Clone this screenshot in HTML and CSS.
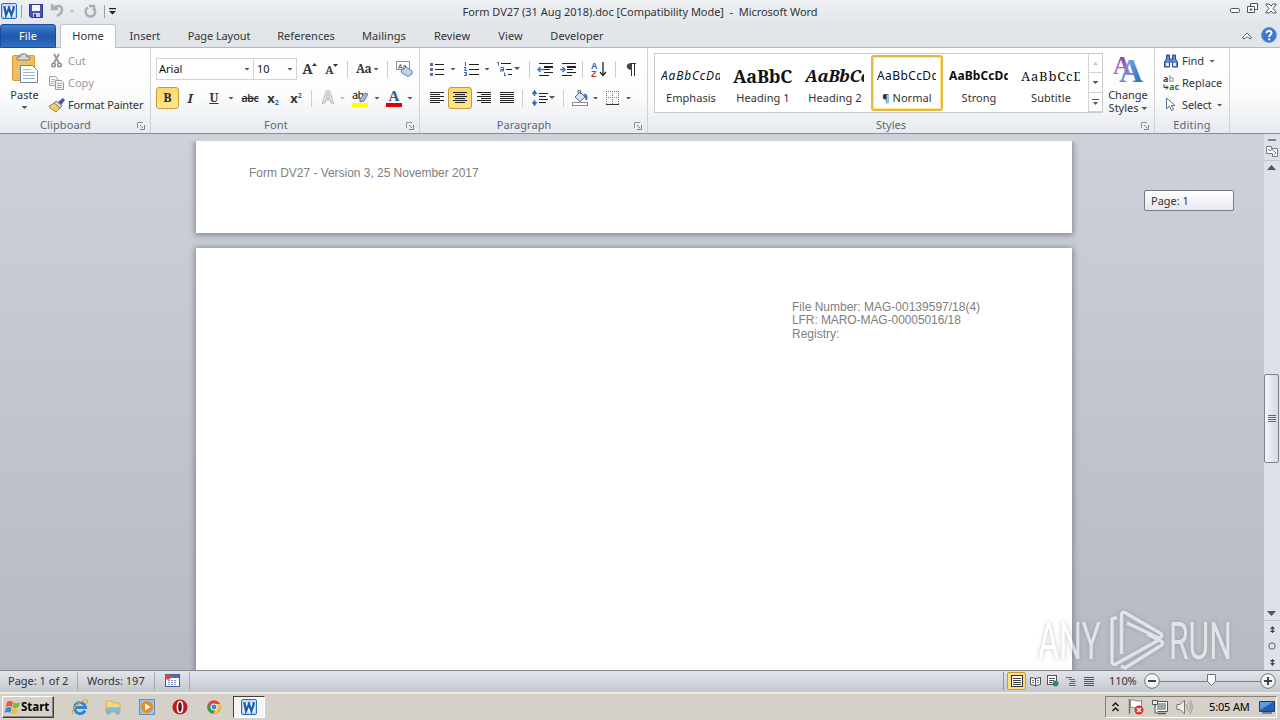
FILE: index.html
```
<!DOCTYPE html>
<html lang="en">
<head>
  <meta charset="UTF-8">
  <title>Form DV27 (31 Aug 2018).doc [Compatibility Mode] - Microsoft Word</title>
  <link rel="stylesheet" href="styles.css">
</head>
<body>

  <!-- shared icons -->
  <svg class="defs" width="0" height="0">
    <defs>
      <linearGradient id="blueG" x1="0" y1="0" x2="1" y2="1"><stop offset="0" stop-color="#8fc0f0"/><stop offset="1" stop-color="#1f5fb8"/></linearGradient>
      <linearGradient id="purpG" x1="0" y1="0" x2="0" y2="1"><stop offset="0" stop-color="#7a3f9c"/><stop offset="1" stop-color="#c878c8"/></linearGradient>
      <symbol id="word" viewBox="0 0 16 16">
        <rect x=".5" y=".5" width="15" height="15" rx="1.5" fill="#d3e4f8" stroke="#2b6fc0"/>
        <path d="M2 2h9l3 3v9H2z" fill="#f6faff" stroke="#8db3e2" stroke-width=".6"/>
        <path d="M3.500 4l1.500 8L8 5l2.500 7 2.500-8" fill="none" stroke="#1a5ab0" stroke-width="2.200"/>
        <path d="M2 3.800h3M6.500 3.800h3M11 3.800h3" stroke="#1f62b8"/>
      </symbol>
      <symbol id="launch" viewBox="0 0 8 8">
        <path d="M.5 6V.5H6" fill="none" stroke="#8b929b"/>
        <path d="M3 3l3 3M7.5 3v4.5H3" fill="none" stroke="#7b828b"/>
      </symbol>
    </defs>
  </svg>

  <div class="titlebar">
    <div class="quick">
      <svg width="16" height="16"><use href="#word"/></svg>
      <i class="vsep"></i>
      <svg width="14" height="14" viewBox="0 0 14 14"><path d="M.5.5h13v13H2L.5 12z" fill="#4c52b8" stroke="#33388c"/><path d="M3 1h8v6H3z" fill="#f2f4fc"/><path d="M4 9h7v4H4z" fill="#cdd2ea"/><path d="M5 10h2v3H5z" fill="#33388c"/></svg>
      <svg class="undo" width="13" height="14" viewBox="0 0 13 14"><path d="M1 0v5h6M1.500 5C4 1.500 11 .5 11 5.500c0 3-2 5-5 6.500" fill="none" stroke="#a9aeb5" stroke-width="2.500"/></svg>
      <b class="dn dim"></b>
      <svg class="redo" width="13" height="13" viewBox="0 0 13 13"><path d="M4 2.500a4.800 4.800 0 1 0 6 1M5 1h5v5" fill="none" stroke="#a9aeb5" stroke-width="2.400"/></svg>
      <i class="vsep"></i>
      <svg width="7" height="7" viewBox="0 0 7 7"><path d="M0 0h7v1.300H0zM0 3h7L3.500 6.500z" fill="#222"/></svg>
    </div>
    <div class="title">Form DV27 (31 Aug 2018).doc [Compatibility Mode] &nbsp;-&nbsp; Microsoft Word</div>
    <svg class="winbtns" width="50" height="14" viewBox="0 0 50 14" fill="#fff" stroke="#4e555e">
      <rect x="1.500" y="6.500" width="9" height="4" rx="1"/>
      <path d="M21.500 1.500h7v6h-7z"/><path d="M18.500 4.500h7v6h-7z"/><path d="M21 7h2v1h-2z"/>
      <path d="M37 2h3l2 2 2-2h3v1l-3 3.500 3 3.500v1h-3l-2-2-2 2h-3v-1l3-3.500L37 3z"/>
    </svg>
  </div>

  <div class="tabs">
    <div class="tab file">File</div>
    <div class="tab home">Home</div>
    <div class="tab">Insert</div>
    <div class="tab wide">Page Layout</div>
    <div class="tab">References</div>
    <div class="tab">Mailings</div>
    <div class="tab">Review</div>
    <div class="tab">View</div>
    <div class="tab">Developer</div>
    <svg class="help" width="36" height="16" viewBox="0 0 36 16">
      <path d="M2 10l4-4 4 4v1.500H8L6 9.500 4 11.500H2z" fill="#fff" stroke="#59606a"/>
      <circle cx="28" cy="8" r="7.500" fill="#3e77cb" stroke="#6c9ade"/>
      <path d="M25.500 6.300c0-3.400 5.200-3.200 5 0-.1 1.500-2.300 1.700-2.300 3.700M28.200 11.200v2" fill="none" stroke="#fff" stroke-width="2"/>
    </svg>
  </div>

  <div class="ribbon">
    <div class="group clipboard">
      <div class="tools">
        <div class="paste">
          <svg width="28" height="30" viewBox="0 0 28 30">
            <rect x="1.500" y="2.500" width="22" height="25" rx="1" fill="#f0bd63" stroke="#d99b3a"/>
            <path d="M6 4h3l1-3h5l1 3h3v3H6z" fill="#d4d8dc" stroke="#7b8085"/>
            <path d="M9.500 12.500h12l5 5v12h-17z" fill="#fff" stroke="#6f87ad"/>
            <path d="M12 16.500h8M12 19.500h12M12 22.500h12M12 25.500h12" stroke="#9db4d6"/>
          </svg>
          <span>Paste</span>
          <b class="dn"></b>
        </div>
        <div class="cmds">
          <div class="cmd off"><svg width="16" height="14" viewBox="0 0 16 14"><path d="M5 0l5 9M10 0L5 9" stroke="#9a9a9a" stroke-width="2"/><circle cx="4.500" cy="11" r="1.800" fill="none" stroke="#8f8f8f" stroke-width="1.500"/><circle cx="10.500" cy="11" r="1.800" fill="none" stroke="#8f8f8f" stroke-width="1.500"/></svg><span>Cut</span></div>
          <div class="cmd off"><svg width="16" height="14" viewBox="0 0 16 14"><path d="M.5.500h6l2 2v7h-8z" fill="#f4f4f4" stroke="#a3a3a3"/><path d="M2 3.500h4M2 5.500h4M2 7.500h3" stroke="#bbb"/><path d="M6.500 4.500h6l2 2v7h-8z" fill="#f4f4f4" stroke="#9a9a9a"/><path d="M8 7.500h5M8 9.500h5M8 11.500h5" stroke="#aaa"/></svg><span>Copy</span></div>
          <div class="cmd"><svg width="16" height="14" viewBox="0 0 16 14"><path d="M9 4l5-4 2 2-4 5z" fill="#5a4fa0"/><path d="M7 3l6 5-2 2-6-5z" fill="#dfe3ee" stroke="#51568c" stroke-width=".8"/><path d="M5 5l6 5-4 4-6-4-1-2z" fill="#ecd064" stroke="#8a7a28" stroke-width=".8"/></svg><span class="fp">Format Painter</span></div>
        </div>
      </div>
      <div class="caption">Clipboard<svg width="8" height="8"><use href="#launch"/></svg></div>
    </div>

    <div class="group font">
      <div class="tools">
        <div class="row font-a">
          <div class="combo">Arial<b class="dn"></b></div>
          <div class="combo size">10<b class="dn"></b></div>
          <span class="serif grow">A<svg width="5" height="3"><path d="M0 3L2.500 0 5 3z" fill="#333"/></svg></span>
          <span class="serif shrink">A<svg width="5" height="3"><path d="M0 0h5L2.500 3z" fill="#333"/></svg></span>
          <i class="vsep"></i>
          <span class="serif case">Aa<b class="dn"></b></span>
          <i class="vsep"></i>
          <svg width="17" height="16" viewBox="0 0 17 16"><rect x=".5" y=".5" width="13" height="8" fill="#fff" stroke="#8a94a5"/><text x="2" y="7.500" class="tiny">Aa</text><path d="M5 10l5-4 6 4v3l-4 2.500-6-3.500z" fill="#bed0ec" stroke="#5e7fb5"/></svg>
        </div>
        <div class="row font-b">
          <span class="serif pressed">B</span>
          <span class="serif italic">I</span>
          <span class="serif under">U</span>
          <b class="dn"></b>
          <span class="strike">abc</span>
          <span class="script">x<sub>2</sub></span>
          <span class="script">x<sup>2</sup></span>
          <i class="vsep left"></i>
          <span class="outline">A</span>
          <b class="dn dim"></b>
          <svg width="18" height="17" viewBox="0 0 18 17"><rect x="1" y="13" width="16" height="4" fill="#ff0"/><text x="1" y="9" class="abtext">ab</text><path d="M9 9l5-6 3 1-4 7-4 1z" fill="#a8bede" stroke="#4a5f86" stroke-width=".8"/></svg>
          <b class="dn"></b>
          <svg width="16" height="17" viewBox="0 0 16 17"><text x="2.500" y="11" class="fonta">A</text><rect y="13" width="16" height="4" fill="#e80000"/></svg>
          <b class="dn"></b>
        </div>
      </div>
      <div class="caption">Font<svg width="8" height="8"><use href="#launch"/></svg></div>
    </div>

    <div class="group para">
      <div class="tools">
        <div class="row para-a">
          <svg width="14" height="14" viewBox="0 0 14 14"><path d="M0 1h3v3H0zM0 6h3v3H0zM0 11h3v3H0z" fill="#5b7096"/><path d="M5 2.500h9M5 7.500h9M5 12.500h9" stroke="#222"/></svg>
          <b class="dn"></b>
          <svg width="15" height="14" viewBox="0 0 15 14"><path d="M.5 .5h1v3.500M0 5.500h2l-1.500 3H3M0 10.500h2.500v3H0M1 12h1.500" fill="none" stroke="#3a63b0"/><path d="M5 2.500h10M5 7.500h10M5 12.500h10" stroke="#222"/></svg>
          <b class="dn"></b>
          <svg class="ml" width="24" height="16" viewBox="0 0 24 16"><path d="M3 1.500h1.500v3M6.500 6.500h3v3.500h-3v-1.500h3M10.500 11.500v3.500M10 14.500h2" fill="none" stroke="#3a63b0"/><path d="M7 2.500h10M12 8.500h6M14 13.500h4" stroke="#222"/><path d="M20 6h6l-3 3z" fill="#555"/></svg>
          <i class="vsep"></i>
          <svg width="16" height="13" viewBox="0 0 16 13"><path d="M2 .5h14M7 3.500h9M7 4.500h9M7 6.500h6M7 9.500h9M2 12.500h10" stroke="#222"/><path d="M7 6.500H1M3.500 4L1 6.500 3.500 9" fill="none" stroke="#3a78c4" stroke-width="1.500"/></svg>
          <svg width="16" height="13" viewBox="0 0 16 13"><path d="M2 .5h14M7 3.500h9M7 4.500h9M7 6.500h6M7 9.500h9M2 12.500h10" stroke="#222"/><path d="M0 6.500h5M2.500 4L5 6.500 2.500 9" fill="none" stroke="#3a78c4" stroke-width="1.500"/></svg>
          <i class="vsep"></i>
          <svg width="16" height="17" viewBox="0 0 16 17"><text x="0" y="7.500" class="sorta">A</text><text x="0" y="16" class="sortz">Z</text><path d="M12 1v13M9 11l3 3.500 3-3.500" fill="none" stroke="#222" stroke-width="1.300"/></svg>
          <i class="vsep"></i>
          <svg width="11" height="13" viewBox="0 0 11 13"><path d="M4.500 .5H10M5.500 1v12M8.500 1v12" stroke="#333"/><path d="M6 0C-1-.5-1 7 6 7z" fill="#444"/></svg>
        </div>
        <div class="row para-b">
          <svg width="14" height="12"><path d="M0 .5h14M0 2.500h10M0 4.500h14M0 6.500h10M0 8.500h14M0 10.500h10" stroke="#222"/></svg>
          <span class="pressed"><svg width="14" height="12"><path d="M0 .5h14M2 2.500h10M0 4.500h14M2 6.500h10M0 8.500h14M2 10.500h10" stroke="#222"/></svg></span>
          <svg width="14" height="12"><path d="M0 .5h14M4 2.500h10M0 4.500h14M4 6.500h10M0 8.500h14M4 10.500h10" stroke="#222"/></svg>
          <svg width="14" height="12"><path d="M0 .5h14M0 2.500h14M0 4.500h14M0 6.500h14M0 8.500h14M0 10.500h14" stroke="#222"/></svg>
          <i class="vsep"></i>
          <svg width="22" height="16" viewBox="0 0 22 16"><path d="M2.500 1v5M2.500 10v5M.5 4l2-3 2 3M.5 12l2 3 2-3" fill="none" stroke="#3a63b0" stroke-width="1.500"/><path d="M7 3.500h9M7 6.500h7M7 9.500h9M7 12.500h7" stroke="#222"/><path d="M17 6h6l-3 3z" fill="#555"/></svg>
          <i class="vsep"></i>
          <svg width="16" height="16" viewBox="0 0 16 16"><path d="M3 7l5-5 5 5-5 4.500z" fill="#d7e3f3" stroke="#54719e"/><path d="M6 4V.5h2.500V4" fill="none" stroke="#666"/><path d="M11 3.500c5 0 5 3 4 7-2-.5-2-2-2-4z" fill="#3f74bd"/><rect x=".5" y="12.500" width="15" height="3" fill="#fff" stroke="#8a8a8a"/></svg>
          <b class="dn"></b>
          <svg width="14" height="14"><path d="M.5 0v13M6.500 0v13M12.500 0v13M0 .5h13M0 6.500h13" stroke="#777" stroke-dasharray="1 1"/><path d="M0 13.500h13" stroke="#333"/></svg>
          <b class="dn"></b>
        </div>
      </div>
      <div class="caption">Paragraph<svg width="8" height="8"><use href="#launch"/></svg></div>
    </div>

    <div class="group styles">
      <div class="tools">
        <div class="gallery">
          <div class="style"><div class="sample s-emph">AaBbCcDd</div><span>Emphasis</span></div>
          <div class="style"><div class="sample s-h1">AaBbC</div><span>Heading 1</span></div>
          <div class="style"><div class="sample s-h2">AaBbCc</div><span>Heading 2</span></div>
          <div class="style sel"><div class="sample s-norm">AaBbCcDd</div><span>¶ Normal</span></div>
          <div class="style"><div class="sample s-strong">AaBbCcDd</div><span>Strong</span></div>
          <div class="style"><div class="sample s-sub">AaBbCcD</div><span>Subtitle</span></div>
          <div class="gscroll">
            <div><svg width="5" height="3"><path d="M0 3h5L2.500 0z" fill="#c0c4c8"/></svg></div>
            <div><b class="dn"></b></div>
            <div><svg width="7" height="7"><path d="M0 0h7v1H0zM1 3h5L3.500 6z" fill="#555"/></svg></div>
          </div>
        </div>
        <div class="change">
          <svg width="30" height="28" viewBox="0 0 30 28"><text x="0" y="19" class="bigp">A</text><text x="6" y="27" class="bigb">A</text></svg>
          <span>Change</span>
          <span>Styles <b class="dn"></b></span>
        </div>
      </div>
      <div class="caption">Styles<svg width="8" height="8"><use href="#launch"/></svg></div>
    </div>

    <div class="group editing">
      <div class="tools">
        <div class="cmds">
          <div class="cmd"><svg width="16" height="14" viewBox="0 0 16 14"><path d="M3.500 1h3v4h3V1h3v4l2 3v5h-5V8h-3v5h-5V8l2-3z" fill="#6389cb" stroke="#25488c"/><path d="M3 9h3v3H3zM10 9h3v3h-3z" fill="#e1ebfb"/></svg><span>Find</span><b class="dn"></b></div>
          <div class="cmd"><svg width="16" height="15" viewBox="0 0 16 15"><text x="0" y="6" class="rep">a<tspan fill="#aaa">b</tspan></text><text x="6" y="14" class="rep repg">ac</text><path d="M1 8.500v3h4M3 9.500l2 2-2 2" fill="none" stroke="#333"/></svg><span>Replace</span></div>
          <div class="cmd"><svg width="16" height="14" viewBox="0 0 16 14"><path d="M3.500 0v11l3-3 2 4.500 2-1-2-4h3.500z" fill="#fff" stroke="#5d7296"/></svg><span class="select">Select</span><b class="dn"></b></div>
        </div>
      </div>
      <div class="caption">Editing</div>
    </div>
  </div>

  <div class="workspace">
    <div class="pages">
      <div class="page first">Form DV27 - Version 3, 25 November 2017</div>
      <div class="page second">
        <div class="header">
          <div class="h1">File Number: MAG-00139597/18(4)</div>
          <div class="h2">LFR: MARO-MAG-00005016/18</div>
          <div class="h3">Registry:</div>
        </div>
      </div>
    </div>
    <div class="tip">Page: 1</div>
    <svg class="watermark" width="200" height="62" viewBox="0 0 200 62">
      <text x="3" y="49" textLength="63" lengthAdjust="spacingAndGlyphs">ANY</text>
      <text x="134" y="49" textLength="63" lengthAdjust="spacingAndGlyphs">RUN</text>
      <path d="M82 7.500L77 9V52q0 3 4 2L123 30.500"/>
      <path d="M86.500 44V5q0-4 4-2L125 23q4 3-1 5L92 13"/>
      <path d="M112 24L126 31q3 2 0 4.500L90 58l-4-2"/>
    </svg>
    <div class="scroll">
      <div class="split"></div>
      <svg class="ruler" width="12" height="12" viewBox="0 0 12 12" fill="#fff" stroke="#747b86"><path d="M.5 1.500h5v2h6v8h-5v-3h-6z"/><path d="M2 4l2 2 2-2 2 2 2 2-2 2" fill="none"/></svg>
      <div class="sbtn up"><svg width="9" height="5"><path d="M0 5h9L4.500 0z" fill="#4e545d"/></svg></div>
      <div class="track"><div class="thumb"><i></i><i></i><i></i><i></i></div></div>
      <div class="sbtn down"><svg width="9" height="5"><path d="M0 0h9L4.500 5z" fill="#4e545d"/></svg></div>
      <div class="browse">
        <svg width="5" height="7"><path d="M0 3h5L2.500 0zM0 6h5L2.500 3zM2 6h1v1H2z" fill="#3f454e"/></svg>
        <svg width="8" height="8"><rect x="1" y="1" width="6" height="6" rx="2.500" fill="#dfe3e9" stroke="#555c66"/></svg>
        <svg width="5" height="7"><path d="M2 0h1v1H2zM0 1h5L2.500 4zM0 4h5L2.500 7z" fill="#3f454e"/></svg>
      </div>
    </div>
  </div>

  <div class="statusbar">
    <div class="cell pg">Page: 1 of 2</div>
    <div class="cell wd">Words: 197</div>
    <div class="cell mac"><svg width="15" height="13" viewBox="0 0 15 13"><rect x=".5" y=".5" width="14" height="12" fill="#fff" stroke="#405d9c"/><path d="M1 1h13v3H1z" fill="#4b6fb8"/><path d="M3 6.500h9M3 8.500h9M3 10.500h9" stroke="#7d97c8" stroke-dasharray="2 1"/><circle cx="3" cy="3" r="2.800" fill="#cf4a55"/></svg></div>
    <div class="views">
      <span class="view on"><svg width="12" height="12"><rect x=".5" y=".5" width="11" height="11" fill="#fff" stroke="#333"/><path d="M2 3.500h8M2 5.500h8M2 7.500h8M2 9.500h8" stroke="#444"/></svg></span>
      <span class="view"><svg width="11" height="11"><path d="M.5 1.500L5.500 2.500 10.500 1.500v7L5.500 9.500 .5 8.500zM5.500 2.500v8" fill="#fff" stroke="#555"/><path d="M2 4.500h2M2 6.500h2M7 4.500h2M7 6.500h2" stroke="#777"/></svg></span>
      <span class="view"><svg width="12" height="12"><rect x=".5" y=".5" width="9" height="9" fill="#fff" stroke="#555"/><path d="M2 3.500h6M2 5.500h5M2 7.500h3" stroke="#555"/><circle cx="8.500" cy="8.500" r="3" fill="#3b7f86"/></svg></span>
      <span class="view"><svg width="10" height="9"><path d="M0 .5h6M3 2.500h6M4 4.500h6M3 6.500h6M3 8.500h7" stroke="#666"/></svg></span>
      <span class="view"><svg width="10" height="9"><path d="M0 .5h10M0 2.500h10M0 4.500h10M0 6.500h10M0 8.500h10" stroke="#555"/></svg></span>
    </div>
    <span class="zoom">110%</span>
    <svg class="slider" width="132" height="16" viewBox="0 0 132 16">
      <path d="M15 8.500h102" stroke="#7a818c"/>
      <circle cx="8" cy="8" r="7.300" fill="#f3f4f6" stroke="#6e747d"/><path d="M4 8h8" stroke="#444" stroke-width="2"/>
      <path d="M63.500 1.500h8v7l-4 4-4-4z" fill="#f6f7f9" stroke="#6e747d"/>
      <circle cx="124" cy="8" r="7.300" fill="#f3f4f6" stroke="#6e747d"/><path d="M120 8h8M124 4v8" stroke="#444" stroke-width="2"/>
    </svg>
  </div>

  <div class="taskbar">
    <div class="start">
      <svg width="16" height="15" viewBox="0 0 16 15"><path d="M3 2q3-2 6 0L8 7Q5 5 2 7z" fill="#e8582b"/><path d="M10 2.500q3 1.500 6 0L14.500 7q-3 2-6 .5z" fill="#7db83a"/><path d="M2 8q3-2 5.500 0L6.500 13q-3-2-6 0z" fill="#3d86d8"/><path d="M8.500 8.500q3 1.500 6 0L13 13q-3 2-5.500 .5z" fill="#f3bd2b"/></svg>
      <span>Start</span>
    </div>
    <div class="launch">
      <svg width="17" height="16" viewBox="0 0 17 16"><path d="M14 11.500A5.500 5.500 0 1 1 14.500 8.500H5" fill="none" stroke="#2f86d6" stroke-width="3"/><path d="M2 15C-2 12 10 0 16 1c1 1 0 3-1 4" fill="none" stroke="#e0b23c" stroke-width="1.300"/></svg>
      <svg width="16" height="16" viewBox="0 0 16 16"><path d="M1 2h6l1 2h7v9H1z" fill="#f4d77a" stroke="#cfa53c" stroke-width=".7"/><path d="M2 15V9h12v6h-3v-3H5v3z" fill="#86c0ea" stroke="#4f93c8" stroke-width=".6"/></svg>
      <svg width="16" height="16" viewBox="0 0 16 16"><rect x=".5" y=".5" width="15" height="15" fill="#9cc5ea" stroke="#5a8fc4"/><circle cx="8" cy="8" r="6" fill="#ef8a1d"/><path d="M6 4.500l5.500 3.500L6 11.500z" fill="#fff"/></svg>
      <svg width="16" height="16" viewBox="0 0 16 16"><circle cx="8" cy="8" r="7.500" fill="#c3151c"/><ellipse cx="8" cy="8" rx="2.600" ry="5.500" fill="#7d0a10" stroke="#fff" stroke-width="1.600"/></svg>
      <svg width="14" height="14" viewBox="0 0 14 14"><circle cx="7" cy="7" r="6.700" fill="#de4536"/><path d="M1 3.800L5 10l2 .5-2 3.200C0 12 0 7 1 3.800z" fill="#2f9e4f"/><path d="M7 4h6c2 5-2 10-7 9.700L9.500 8z" fill="#f6c92f"/><circle cx="7" cy="7" r="3.100" fill="#4283e0" stroke="#fff"/></svg>
    </div>
    <div class="task"><svg width="16" height="16"><use href="#word"/></svg></div>
    <div class="tray">
      <svg width="7" height="10" viewBox="0 0 7 10"><path d="M.5 4l3-3 3 3M.5 9l3-3 3 3" fill="none" stroke="#111" stroke-width="1.400"/></svg>
      <svg width="16" height="16" viewBox="0 0 16 16"><path d="M1.500 0v15" stroke="#777" stroke-width="1.500"/><path d="M2.500 1.500c4-2 5 2 11 0v7c-5 2-7-1-11 0z" fill="#fff" stroke="#888"/><circle cx="11" cy="11" r="4.500" fill="#d92f2f"/><path d="M9 9l4 4M13 9l-4 4" stroke="#fff" stroke-width="1.500"/></svg>
      <svg width="16" height="16" viewBox="0 0 16 16"><rect x="4.500" y="3.500" width="10" height="8" fill="#9fa5a8" stroke="#fff"/><path d="M3.500 2.500h12v10h-12z" fill="none" stroke="#555"/><path d="M6 14.500h8" stroke="#555" stroke-width="1.500"/><path d="M.5 1.500h5v4h-5zM3 6v8h3" fill="#eee" stroke="#555"/></svg>
      <svg width="17" height="16" viewBox="0 0 17 16"><path d="M1 5.500h3L8.500 1v14L4 10.500H1z" fill="#eee" stroke="#777"/><path d="M10.500 5q2 3 0 6M12.500 3q3.500 5 0 10M14 1q4.500 7 0 14" fill="none" stroke="#999"/></svg>
      <span>5:05 AM</span>
      <svg width="16" height="13" viewBox="0 0 16 13"><path d="M.5.500h15v10H.5z" fill="#2460b8" stroke="#173f7c"/><path d="M1 1h13L1 9z" fill="#5f9ae0"/><path d="M3 12h10" stroke="#333"/></svg>
    </div>
  </div>

</body>
</html>
```

FILE: styles.css
```
* { box-sizing: border-box; }
body {
  margin: 0;
  width: 1280px;
  height: 720px;
  overflow: hidden;
  display: flex;
  flex-direction: column;
  font-family: "Noto Sans", sans-serif;
  font-size: 11px;
  line-height: 14px;
  color: #333;
  background: #dfe3e8;
  white-space: nowrap;
}
svg { display: block; flex: none; overflow: visible; }
.defs { position: absolute; }

/* small helpers */
.dn {
  display: inline-block;
  flex: none;
  width: 6px;
  height: 3px;
  background: #555;
  clip-path: polygon(0 0, 100% 0, 50% 100%);
}
.dim { background: #b5b9be; }
.vsep { display: block; width: 1px; height: 17px; background: #c9ccd1; }

/* title bar */
.titlebar {
  display: grid;
  grid-template-columns: 280px 1fr 280px;
  height: 24px;
  background: linear-gradient(#eef0f3, #e2e6ea);
}
.quick { display: flex; align-items: center; padding: 0 0 2px 1px; }
.quick .vsep { height: 13px; background: #9aa0a8; margin: 0 7px 0 4px; }
.undo { margin-left: 8px; }
.quick .dn { margin: 0 9px 0 5px; }
.quick .redo + .vsep { margin: 0 4px 0 7px; }
.title { text-align: center; line-height: 24px; letter-spacing: -0.04px; }
.winbtns { justify-self: end; margin: 2px 1px 0 0; }

/* ribbon tabs */
.tabs {
  display: grid;
  grid-template-columns: 56px 64px 50px 98px 76px 80px 56px 61px 72px 1fr;
  height: 24px;
  background: #e2e6ea;
  border-bottom: 1px solid #b4b8be;
}
.tab { text-align: center; line-height: 24px; letter-spacing: 0.05px; }
.wide { letter-spacing: -0.1px; }
.file {
  background: linear-gradient(#3f7fd0, #1f57ab 50%, #3271c4);
  border: 1px solid #1c4d99;
  border-radius: 3px 3px 0 0;
  color: #fff;
  line-height: 22px;
}
.home {
  height: 24px;
  margin: 0 4px;
  background: #fff;
  border: 1px solid #c0c4ca;
  border-bottom: 0;
  border-radius: 3px 3px 0 0;
  line-height: 22px;
}
.help { justify-self: end; margin: 3px 3px 0 0; }

/* ribbon */
.ribbon {
  display: flex;
  height: 86px;
  background: linear-gradient(#fff, #fcfcfd 55%, #e6eaee);
  border-bottom: 1px solid #8a8f97;
}
.group {
  display: flex;
  flex-direction: column;
  border-right: 1px solid #cfd3d8;
}
.clipboard { width: 151px; }
.font { width: 269px; }
.para { width: 228px; }
.styles { width: 507px; }
.editing { width: 75px; }
.tools { height: 69px; }
.caption {
  display: flex;
  justify-content: center;
  position: relative;
  height: 16px;
  color: #5d6671;
  line-height: 16px;
  letter-spacing: 0.2px;
}
.clipboard .caption { padding-right: 19px; letter-spacing: 0.1px; }
.font .caption { padding-right: 18px; }
.para .caption { padding-right: 19px; letter-spacing: 0.05px; }
.styles .caption { padding-right: 20px; letter-spacing: 0; }
.caption svg { position: absolute; right: 5px; top: 5px; }

.clipboard .tools { display: flex; }
.paste {
  display: flex;
  flex-direction: column;
  align-items: center;
  width: 49px;
  padding-top: 5px;
}
.paste span { margin: 5px 0 4px; }
.cmds { padding-top: 2px; }
.cmd { display: flex; align-items: center; height: 22px; }
.cmd span { margin-left: 3px; }
.cmd .fp { letter-spacing: -0.15px; }
.cmd .select { letter-spacing: -0.15px; }
.cmd .dn { margin-left: 5px; }
.off { color: #9a9a9a; }
.editing .cmds { padding-left: 8px; }

.row { display: grid; align-items: center; justify-items: center; height: 22px; }
.font .tools { padding: 10px 0 0 5px; }
.font-a { grid-template-columns: 98px 43px 25px 19px 12px 29px 11px 22px; }
.font-b {
  grid-template-columns: 23px 22px 26px 8px 30px 16px 30px 6px 22px 7px 28px 6px 28px 4px;
  margin-top: 7px;
}
.para .tools { padding: 10px 0 0 5px; }
.para-a { grid-template-columns: 24px 8px 28px 4px 34px 12px 20px 25px 4px 29px 4px 28px; }
.para-b {
  grid-template-columns: 23px 24px 24px 22px 9px 32px 8px 26px 5px 29px 3px;
  margin-top: 7px;
}
.combo {
  display: flex;
  justify-content: space-between;
  align-items: center;
  width: 100%;
  height: 22px;
  padding: 0 3px 0 2px;
  border: 1px solid #d0d3d8;
  background: #fff;
  color: #111;
}
.combo.size { border-left: 0; padding-left: 3px; }
.serif { font-family: "Noto Serif", "DejaVu Serif", serif; font-weight: bold; color: #333; }
.grow, .shrink, .case { display: flex; align-items: center; }
.grow { font-size: 14px; letter-spacing: -1px; }
.shrink { font-size: 11px; padding-top: 2px; letter-spacing: -1px; }
.grow svg, .shrink svg { margin-bottom: 10px; }
.case { font-size: 12px; letter-spacing: -0.5px; }
.case .dn { margin-left: 2px; }
.pressed {
  display: flex;
  align-items: center;
  justify-content: center;
  width: 100%;
  height: 22px;
  border: 1px solid #c59b3a;
  border-radius: 3px;
  background: linear-gradient(#fbd776, #fde07c 50%, #ffe68a);
  font-size: 12.5px;
}
.italic { font-style: italic; font-size: 13px; }
.under { font-size: 12px; text-decoration: underline; }
.strike { font-size: 10.5px; font-weight: 600; text-decoration: line-through; letter-spacing: -0.3px; }
.script { font-size: 13px; font-weight: bold; line-height: 16px; }
.script sub, .script sup { font-size: 7px; line-height: 0; color: #2f62b3; }
.script sub { vertical-align: -2px; }
.script sup { vertical-align: 5px; }
.left { justify-self: start; }
.outline {
  font: bold 17px "Liberation Sans", sans-serif;
  color: #f2f2f2;
  -webkit-text-stroke: 1px #b9bcc0;
}
.tiny { font: 7px "Noto Sans", sans-serif; fill: #333; }
.abtext { font: 500 11px "Noto Sans", sans-serif; fill: #333; letter-spacing: -0.7px; }
.fonta { font: bold 15px "Liberation Serif", serif; fill: #34558f; }
.sorta { font: bold 9px "Liberation Sans", sans-serif; fill: #3a63b0; }
.sortz { font: bold 9px "Liberation Sans", sans-serif; fill: #a8403a; }

/* style gallery */
.styles .tools { display: flex; padding: 5px 0 0 6px; }
.gallery {
  display: flex;
  width: 449px;
  height: 60px;
  border: 1px solid #c9ccd1;
  background: #fff;
}
.style { width: 72px; padding: 12px 7px 0 6px; text-align: center; }
.style span { display: block; margin: 5px -1px 0 0; letter-spacing: 0.05px; }
.sel {
  height: 56px;
  margin-top: 1px;
  padding: 9px 5px 0 4px;
  border: 2px solid #e5b93f;
  box-shadow: inset 0 0 0 1px #fae58c;
  border-radius: 3px;
}
.sample { height: 20px; line-height: 20px; overflow: hidden; color: #111; text-align: left; }
.s-emph { font-size: 12px; font-style: italic; letter-spacing: 0.8px; }
.s-h1 { font: bold 18px/20px "Noto Serif", "DejaVu Serif", serif; letter-spacing: -0.2px; }
.s-h2 { font: italic bold 17px/20px "Noto Serif", "DejaVu Serif", serif; letter-spacing: -0.4px; }
.s-norm { font-size: 12px; letter-spacing: 0.4px; }
.s-strong { font-size: 12px; font-weight: bold; letter-spacing: 0.1px; }
.s-sub { font: 13px/20px "Noto Serif", "DejaVu Serif", serif; letter-spacing: 0.8px; }
.gscroll { display: grid; grid-template-rows: 19px 20px 1fr; width: 14px; margin-left: 1px; }
.gscroll div {
  display: flex;
  align-items: center;
  justify-content: center;
  border: solid #d0d3d8;
  border-width: 0 0 1px 1px;
}
.change {
  display: flex;
  flex-direction: column;
  align-items: center;
  width: 50px;
  padding-top: 2px;
}
.change span { line-height: 13px; }
.change svg + span { margin-top: 5px; }
.change .dn { margin-bottom: 2px; }
.bigp { font: bold 25px "Liberation Serif", serif; fill: url(#purpG); }
.bigb { font: bold 33px "Liberation Serif", serif; fill: url(#blueG); }
.rep { font: bold 9px "Noto Sans", sans-serif; fill: #444; }
.repg { fill: #2c7a3c; }

/* document area */
.workspace {
  position: relative;
  display: flex;
  justify-content: space-between;
  height: 536px;
  overflow: hidden;
  background: linear-gradient(#cdd1d9, #c2c5cd 50%, #b6bac2);
}
.pages {
  display: flex;
  flex-direction: column;
  gap: 15px;
  margin-left: 196px;
  padding-top: 7px;
  font: 12px/14px "Liberation Sans", sans-serif;
  color: #808080;
}
.page {
  flex: none;
  width: 876px;
  background: #fff;
  box-shadow: 0 1px 6px 1px #7d828b;
}
.first { height: 92px; padding: 25px 53px; letter-spacing: -0.03px; clip-path: inset(0 -8px -15px -8px); }
.second { height: 430px; }
.header { padding: 52.8px 0 0 596px; line-height: 13.4px; }
.h2 { letter-spacing: -0.08px; }
.tip {
  position: absolute;
  left: 1144px;
  top: 56px;
  width: 90px;
  height: 21px;
  padding-left: 6px;
  border: 1px solid #767a83;
  border-radius: 2px;
  background: linear-gradient(#fff, #e6e8f0);
  line-height: 20px;
}
.watermark {
  position: absolute;
  left: 1035px;
  top: 476px;
  opacity: 0.6;
  filter: drop-shadow(0 0 2px rgba(110, 115, 125, 0.7));
}
.watermark text { font: 400 51px Roboto, sans-serif; fill: #fff; }
.watermark path { fill: none; stroke: #fff; stroke-width: 3.5; stroke-linejoin: round; }

.scroll {
  display: flex;
  flex-direction: column;
  align-items: center;
  width: 16px;
  background: #dde1ea;
}
.split { width: 8px; height: 2px; margin: 5px 0 4px; background: #7b828c; }
.ruler { margin-bottom: 3px; }
.sbtn { display: flex; align-items: center; justify-content: center; width: 16px; height: 14px; }
.sbtn svg { margin-right: 1px; }
.up { border-top: 1px solid #c3c7d0; }
.down { border-bottom: 1px solid #bfc3cc; }
.track { width: 16px; flex: 1; padding: 200px 1px 0 0; }
.thumb {
  display: flex;
  flex-direction: column;
  align-items: center;
  justify-content: center;
  gap: 1px;
  height: 89px;
  border: 1px solid #7d838f;
  border-radius: 2px;
  background: linear-gradient(90deg, #f3f5f9, #d3d8e3);
}
.thumb i { width: 8px; height: 1px; background: #5f6671; }
.browse {
  display: flex;
  flex-direction: column;
  align-items: center;
  justify-content: space-around;
  height: 49px;
}

/* status bar */
.statusbar {
  display: flex;
  align-items: center;
  height: 24px;
  padding-bottom: 1px;
  border-top: 1px solid #858a94;
  border-bottom: 2px solid #eceae6;
  background: linear-gradient(#e2e4e9, #c4c8d0);
}
.cell { height: 18px; line-height: 18px; border-right: 1px solid #a4a9b2; }
.pg { width: 78px; padding-left: 8px; }
.wd { width: 77px; padding-left: 9px; }
.mac { width: 35px; padding: 2px 0 0 10px; }
.views {
  display: grid;
  grid-template-columns: 19px 18px 18px 18px 18px;
  align-items: center;
  height: 18px;
  margin-left: auto;
  padding-left: 3px;
  border-left: 1px solid #9097a1;
}
.view { display: flex; align-items: center; justify-content: center; height: 18px; }
.on { border: 1px solid #c59b3a; border-radius: 2px; background: #fde07c; }
.zoom { width: 46px; padding-left: 11px; letter-spacing: -0.1px; }
.slider { margin-right: 4px; }

/* taskbar */
.taskbar { display: flex; align-items: center; height: 26px; padding: 0 3px 0 2px; background: #d5d0c8; }
.start {
  display: flex;
  align-items: center;
  gap: 1px;
  width: 52px;
  height: 22px;
  padding-left: 1px;
  border: 1px solid;
  border-color: #fff #404040 #404040 #fff;
  box-shadow: inset -1px -1px #858078;
  color: #000;
  font-weight: bold;
  font-size: 11.5px;
}
.launch {
  display: grid;
  grid-template-columns: repeat(5, 33.5px);
  align-items: center;
  justify-items: center;
  margin-left: 9px;
}
.task {
  display: flex;
  align-items: center;
  justify-content: center;
  width: 32px;
  height: 22px;
  margin-left: 2px;
  border: 1px solid;
  border-color: #404040 #fff #fff #404040;
  background: #f6f5f3;
}
.tray {
  display: flex;
  align-items: center;
  width: 172px;
  height: 22px;
  margin-left: auto;
  padding-left: 6px;
  border: 1px solid;
  border-color: #858078 #fff #fff #858078;
  color: #000;
}
.tray svg:nth-child(2) { margin: 0 8px 0 9px; }
.tray svg:nth-child(3) { margin-right: 8px; }
.tray span { width: 50px; margin-left: 16px; font-size: 11px; letter-spacing: -0.15px; }
```
